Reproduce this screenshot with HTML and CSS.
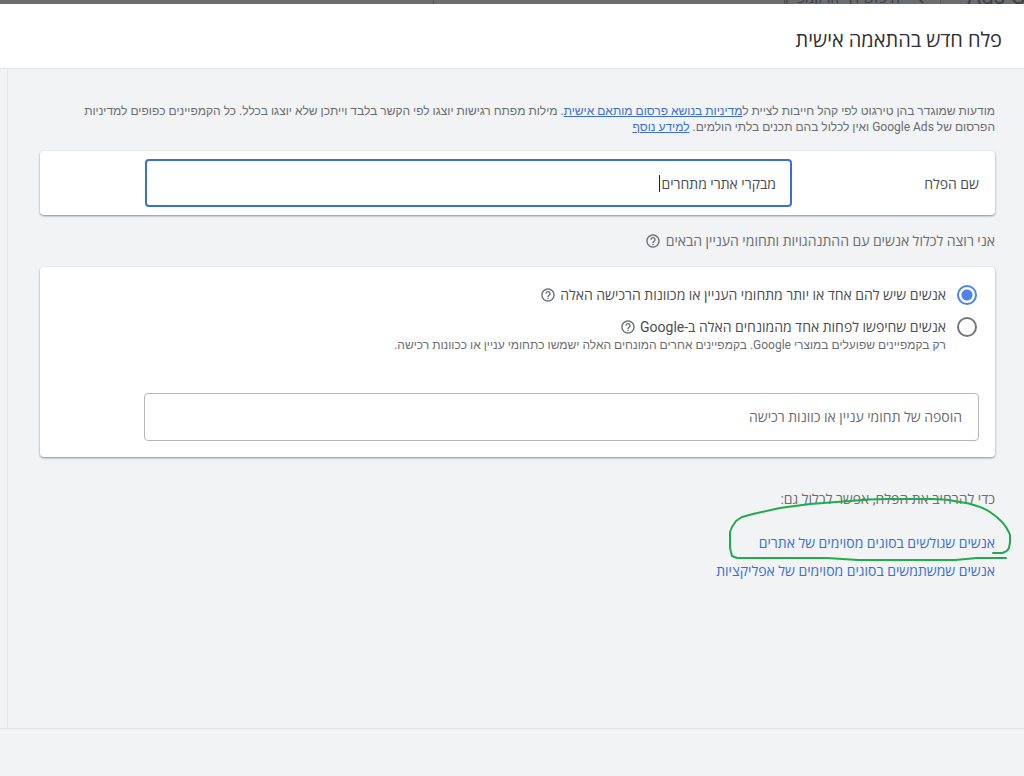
FILE: index.html
```html
<!DOCTYPE html>
<html lang="he" dir="rtl">
<head>
<meta charset="utf-8">
<title>פלח חדש בהתאמה אישית</title>
<link rel="stylesheet" href="styles.css">
</head>
<body>
<svg class="defs" aria-hidden="true">
  <symbol id="help" viewBox="0 0 24 24">
    <path d="M11 18h2v-2h-2v2zm1-16C6.480 2 2 6.480 2 12s4.480 10 10 10 10-4.480 10-10S17.520 2 12 2zm0 18c-4.410 0-8-3.590-8-8s3.590-8 8-8 8 3.590 8 8-3.590 8-8 8zm0-14c-2.210 0-4 1.790-4 4h2c0-1.100.9-2 2-2s2 .9 2 2c0 2-3 1.750-3 5h2c0-2.250 3-2.500 3-5 0-2.210-1.790-4-4-4z"/>
  </symbol>
</svg>
<div class="backdrop" aria-hidden="true">
  <span class="brand" dir="ltr">Ads Google</span>
  <span class="rule"></span>
  <span class="search">
    <svg class="lens" viewBox="0 0 20 20"><circle cx="8" cy="8" r="6"/><path d="M12 12l7 7"/></svg>
    <span class="search-text">חיפוש דף או קמפיין</span>
  </span>
  <span class="rule edge"></span>
</div>
<header class="header">
  <h1 class="title">פלח חדש בהתאמה אישית</h1>
</header>
<main class="content">
  <p class="policy">מודעות שמוגדר בהן טירגוט לפי קהל חייבות לציית ל<a href="#policy">מדיניות בנושא פרסום מותאם אישית</a>. מילות מפתח רגישות יוצגו לפי הקשר בלבד וייתכן שלא יוצגו בכלל. כל הקמפיינים כפופים למדיניות הפרסום של Google Ads ואין לכלול בהם תכנים בלתי הולמים. <a href="#more">למידע נוסף</a></p>

  <section class="card name-card">
    <label class="name-label" for="segment-name">שם הפלח</label>
    <div class="name-field">
      <input class="name-input" id="segment-name" type="text" value="מבקרי אתרי מתחרים">
      <span class="caret"></span>
    </div>
  </section>

  <h2 class="intro">אני רוצה לכלול אנשים עם ההתנהגויות ותחומי העניין הבאים <svg class="help"><use href="#help"/></svg></h2>

  <section class="card options-card">
    <div class="option">
      <input class="radio" type="radio" name="kind" id="kind-interest" checked>
      <label for="kind-interest">אנשים שיש להם אחד או יותר מתחומי העניין או מכוונות הרכישה האלה</label>
      <svg class="help"><use href="#help"/></svg>
    </div>
    <div class="option">
      <input class="radio" type="radio" name="kind" id="kind-search">
      <label for="kind-search">אנשים שחיפשו לפחות אחד מהמונחים האלה ב-Google</label>
      <svg class="help"><use href="#help"/></svg>
    </div>
    <p class="hint">רק בקמפיינים שפועלים במוצרי Google. בקמפיינים אחרים המונחים האלה ישמשו כתחומי עניין או ככוונות רכישה.</p>
    <input class="interest-input" type="text" aria-label="תחומי עניין או כוונות רכישה" placeholder="הוספה של תחומי עניין או כוונות רכישה">
  </section>

  <section class="expand">
    <p class="expand-title">כדי להרחיב את הפלח, אפשר לכלול גם:</p>
    <a class="expand-link" href="#sites">אנשים שגולשים בסוגים מסוימים של אתרים</a>
    <a class="expand-link" href="#apps">אנשים שמשתמשים בסוגים מסוימים של אפליקציות</a>
    <svg class="marker" viewBox="0 0 290 70" aria-hidden="true"><path d="M264 55 L273 55 Q278 54 280 50 L281 44 L281 37 Q278 29 272 23 Q267 18 261 14 Q255 10 248 8 Q240 5 231 4 Q218 1 204 1 L158 1 Q140 1 121 3 L81 6 L51 10 L24 16 L13 19 L7 23 L3 29 L1 34 L1 50 L3 58 L8 60 L98 60 L129 62 L226 62 L248 60 L277 60"/></svg>
  </section>
</main>
<footer class="footer"></footer>
</body>
</html>
```
FILE: styles.css
```css
* { box-sizing: border-box; }

body {
  margin: 0;
  min-height: 100vh;
  display: flex;
  flex-direction: column;
  background: #f1f3f4;
  color: #4a4d51;
  font: 14px/20px Roboto, "Open Sans", sans-serif;
}

h1, h2, p { margin: 0; font-weight: 400; }

.defs { position: absolute; width: 0; height: 0; }

.backdrop {
  display: flex;
  align-items: flex-end;
  height: 4px;
  overflow: hidden;
  background: #6b6c6e;
  color: #3c4043;
  white-space: nowrap;
}
.brand {
  width: 57px;
  font-size: 22px;
  line-height: 14px;
  direction: ltr;
}
.rule { width: 1px; height: 4px; margin: 0 26px 0 16px; background: #58595b; }
.rule.edge { margin: 0 350px 0 0; }
.search { display: flex; align-items: flex-end; gap: 8px; border-left: 1px solid #4b4c4e; }
.lens { width: 16px; height: 16px; fill: none; stroke: #3c4043; stroke-width: 2; }
.search-text { font-size: 15px; line-height: 12px; }

.header {
  padding: 22px 22px 14px;
  background: #fff;
  border-bottom: 1px solid #e3e5e6;
}
.title { font-size: 20px; line-height: 28px; color: #303134; }

.content {
  flex: 1;
  margin-left: 7px;
  padding: 34px 29px 0 32px;
  border-left: 1px solid #e3e5e6;
}

a { color: #3b6fd6; }

.policy, .hint {
  font: 12px/16px Roboto, "Liberation Sans", sans-serif;
  color: #6a6d71;
}
.policy { padding-left: 28px; }

.card {
  background: #fff;
  border-radius: 4px;
  box-shadow: 0 1px 2px rgba(60, 64, 67, .4), 0 1px 3px rgba(60, 64, 67, .2);
}

.name-card {
  display: grid;
  grid-template-columns: 187px 1fr;
  align-items: center;
  margin-top: 16px;
  padding: 8px 16px 8px 105px;
}
.name-label { padding-top: 2px; }
.name-field { position: relative; }
.name-input, .interest-input {
  display: block;
  width: 100%;
  height: 48px;
  padding: 0 16px;
  border: 1px solid #b4b7ba;
  border-radius: 4px;
  background: #fff;
  color: #4a4d51;
  font: inherit;
  outline: 0;
}
.name-input { border: 2px solid #3b6fd6; padding: 0 14px; }
.caret { position: absolute; top: 16px; right: 132px; width: 1px; height: 17px; background: #202124; }

.intro {
  display: flex;
  align-items: center;
  gap: 5px;
  margin: 16px 0;
  font-size: 14px;
  color: #6a6d71;
}
.help { width: 16px; height: 16px; fill: #6a6d71; }

.options-card { padding: 16px 16px 16px 104px; }
.option { display: flex; align-items: center; margin-bottom: 8px; height: 24px; }
.option .help { margin-right: 4px; }
.radio {
  appearance: none;
  width: 20px;
  height: 20px;
  margin: 0 2px 0 11px;
  border: 2px solid #75777a;
  border-radius: 50%;
}
.radio:checked {
  border-color: #4f82ee;
  background: radial-gradient(circle, #4f82ee 5px, transparent 6px);
}
.hint { margin: -10px 33px 0 0; }
.interest-input { margin-top: 40px; }
.interest-input::placeholder { color: #6a6d71; opacity: 1; }

.expand { position: relative; display: flex; flex-direction: column; align-items: flex-start; margin-top: 32px; }
.expand-title { margin-bottom: 24px; color: #6a6d71; }
.expand-link { margin-bottom: 8px; text-decoration: none; }
.marker {
  position: absolute;
  top: 9px;
  right: -24px;
  width: 290px;
  height: 70px;
  fill: none;
  stroke: #20ab4d;
  stroke-width: 2;
  stroke-linejoin: round;
  stroke-linecap: round;
  pointer-events: none;
}

.footer { height: 48px; border-top: 1px solid #e3e5e6; }
```
